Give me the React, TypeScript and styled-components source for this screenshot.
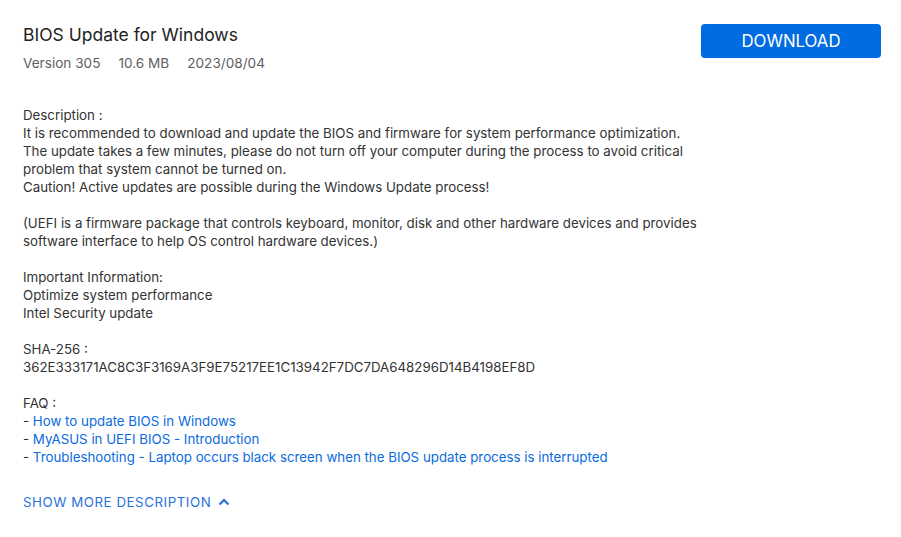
import React from "react";
import styled, { createGlobalStyle } from "styled-components";

const Global = createGlobalStyle`
  body { margin: 0; background: #fff; font-family: Inter, Roboto, "Liberation Sans", sans-serif; }
`;

const Page = styled.div`
  padding: 24px 20px 0 23px;
  display: flex;
  flex-direction: column;
`;

const Header = styled.div`
  display: flex;
  justify-content: space-between;
  align-items: flex-start;
`;

const TitleBlock = styled.div`
  display: flex;
  flex-direction: column;
  gap: 8px;
`;

const Title = styled.h1`
  margin: 0;
  font-size: 17.5px;
  font-weight: 400;
  line-height: 22px;
  color: #222;
`;

const Meta = styled.div`
  display: flex;
  gap: 18px;
  font-size: 13.6px;
  color: #5f5f5f;
  line-height: 18px;
`;

const DownloadButton = styled.button`
  width: 180px;
  height: 34px;
  border: none;
  border-radius: 4px;
  background: #006ce1;
  color: #fff;
  font-family: inherit;
  font-size: 16.8px;
  font-weight: 400;
  cursor: pointer;
`;

const Body = styled.div`
  margin-top: 34px;
  width: 680px;
  font-size: 13.3px;
  line-height: 18px;
  color: #333;
`;

const Para = styled.p`
  margin: 0 0 18px;
`;

const Link = styled.a`
  color: #0a6be0;
  text-decoration: none;
`;

const More = styled.button`
  margin-top: 9px;
  align-self: flex-start;
  display: flex;
  align-items: center;
  gap: 7px;
  padding: 0;
  border: none;
  background: none;
  color: #2a72dd;
  font-family: inherit;
  font-size: 13.3px;
  letter-spacing: 0.55px;
  line-height: 18px;
  cursor: pointer;
`;

export default function App() {
  return (
    <>
      <Global />
      <Page>
        <Header>
          <TitleBlock>
            <Title>BIOS Update for Windows</Title>
            <Meta>
              <span>Version 305</span>
              <span>10.6 MB</span>
              <span>2023/08/04</span>
            </Meta>
          </TitleBlock>
          <DownloadButton>DOWNLOAD</DownloadButton>
        </Header>
        <Body>
          <Para>
            Description :<br />
            It is recommended to download and update the BIOS and firmware for system performance optimization.<br />
            The update takes a few minutes, please do not turn off your computer during the process to avoid critical problem that system cannot be turned on.<br />
            Caution! Active updates are possible during the Windows Update process!
          </Para>
          <Para>
            (UEFI is a firmware package that controls keyboard, monitor, disk and other hardware devices and provides software interface to help OS control hardware devices.)
          </Para>
          <Para>
            Important Information:<br />
            Optimize system performance<br />
            Intel Security update
          </Para>
          <Para>
            SHA-256 :<br />
            362E333171AC8C3F3169A3F9E75217EE1C13942F7DC7DA648296D14B4198EF8D
          </Para>
          <Para>
            FAQ :<br />
            - <Link href="#">How to update BIOS in Windows</Link><br />
            - <Link href="#">MyASUS in UEFI BIOS - Introduction</Link><br />
            - <Link href="#">Troubleshooting - Laptop occurs black screen when the BIOS update process is interrupted</Link>
          </Para>
        </Body>
        <More>
          SHOW MORE DESCRIPTION
          <svg width="12" height="8" viewBox="0 0 12 8" fill="none">
            <path d="M1.5 6.5 L6 2 L10.5 6.5" stroke="#2a72dd" strokeWidth="2.2" />
          </svg>
        </More>
      </Page>
    </>
  );
}
